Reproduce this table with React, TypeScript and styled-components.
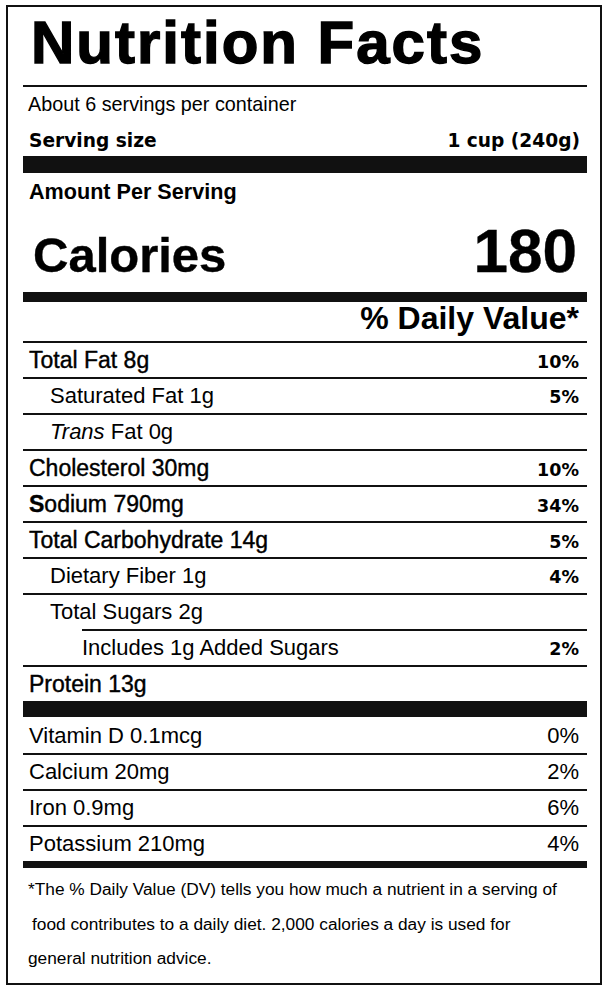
import React from 'react'
import styled, { createGlobalStyle } from 'styled-components'

const GlobalStyle = createGlobalStyle`
  html, body {
    margin: 0;
    padding: 0;
    background: #ffffff;
  }
  body {
    font-family: "Liberation Sans", Arial, sans-serif;
    color: #000;
  }
`

type Nutrient = {
  name: React.ReactNode
  amount: string
  dv?: string
  level: 0 | 1 | 2
  lineInset?: number
}

const nutrients: Nutrient[] = [
  { name: 'Total Fat', amount: '8g', dv: '10%', level: 0 },
  { name: 'Saturated Fat', amount: '1g', dv: '5%', level: 1 },
  { name: <><i>Trans</i> Fat</>, amount: '0g', level: 1 },
  { name: 'Cholesterol', amount: '30mg', dv: '10%', level: 0 },
  { name: <><b>S</b>odium</>, amount: '790mg', dv: '34%', level: 0 },
  { name: 'Total Carbohydrate', amount: '14g', dv: '5%', level: 0 },
  { name: 'Dietary Fiber', amount: '1g', dv: '4%', level: 1 },
  { name: 'Total Sugars', amount: '2g', level: 1, lineInset: 59 },
  { name: 'Includes 1g Added Sugars', amount: '', dv: '2%', level: 2 },
]

const vitamins = [
  { name: 'Vitamin D 0.1mcg', dv: '0%' },
  { name: 'Calcium 20mg', dv: '2%' },
  { name: 'Iron 0.9mg', dv: '6%' },
  { name: 'Potassium 210mg', dv: '4%' },
]

function App() {
  return (
    <>
      <GlobalStyle />
      <Label>
        <Title>Nutrition Facts</Title>
        <Rule $size={2} $gap={8} />
        <Servings>About 6 servings per container</Servings>
        <ServingSize>
          <span>Serving size</span>
          <span>1 cup (240g)</span>
        </ServingSize>
        <Rule $size={17} $gap={3} />
        <AmountPer>Amount Per Serving</AmountPer>
        <CaloriesRow>
          <CaloriesLabel>Calories</CaloriesLabel>
          <CaloriesValue>180</CaloriesValue>
        </CaloriesRow>
        <Rule $size={10} $gap={11} />
        <DailyHead>% Daily Value*</DailyHead>
        <Rule $size={2} $gap={7} />
        {nutrients.map((n, i) => (
          <React.Fragment key={i}>
            <Row $level={n.level}>
              <RowName $main={n.level === 0}>
                {n.name}
                {n.amount ? ' ' + n.amount : ''}
              </RowName>
              {n.dv && <BoldPercent>{n.dv}</BoldPercent>}
            </Row>
            <Rule $size={2} $inset={n.lineInset} />
          </React.Fragment>
        ))}
        <Row $level={0}>
          <RowName $main>Protein 13g</RowName>
        </Row>
        <Rule $size={16} />
        <Vitamins>
          {vitamins.map((v, i) => (
            <React.Fragment key={v.name}>
              <Row $level={0}>
                <RowName>{v.name}</RowName>
                <PlainPercent>{v.dv}</PlainPercent>
              </Row>
              {i < vitamins.length - 1 && <Rule $size={2} />}
            </React.Fragment>
          ))}
        </Vitamins>
        <Rule $size={7} />
        <Footnote>
          <FootLine>*The % Daily Value (DV) tells you how much a nutrient in a serving of</FootLine>
          <FootLine $indent={4}>food contributes to a daily diet. 2,000 calories a day is used for</FootLine>
          <FootLine>general nutrition advice.</FootLine>
        </Footnote>
      </Label>
    </>
  )
}

export default App

const Label = styled.div`
  margin: 5px 0 0 6px;
  width: 596px;
  height: 980px;
  box-sizing: border-box;
  border: 2px solid #111;
  padding: 0 13px 0 15px;
  display: flex;
  flex-direction: column;
  font-family: "Liberation Sans", Arial, sans-serif;
  color: #000;
`

const Title = styled.h1`
  margin: 0;
  height: 70px;
  padding-left: 8px;
  font-size: 60px;
  line-height: 72px;
  font-weight: 700;
  letter-spacing: 2px;
  -webkit-text-stroke: 1.4px #000;
  white-space: nowrap;
`

const Rule = styled.div<{ $size: number; $gap?: number; $inset?: number }>`
  flex: none;
  height: ${p => p.$size}px;
  margin-top: ${p => p.$gap ?? 0}px;
  margin-left: ${p => p.$inset ?? 0}px;
  background: #111;
`

const Servings = styled.div`
  padding: 5px 0 0 5px;
  font-size: 19.8px;
  line-height: 24px;
`

const ServingSize = styled.div`
  margin-top: 13px;
  padding: 0 7px 0 6px;
  display: flex;
  justify-content: space-between;
  font-family: "DejaVu Sans", Verdana, sans-serif;
  font-weight: 700;
  font-size: 18.6px;
  line-height: 24px;
`

const AmountPer = styled.div`
  padding: 7px 0 0 6px;
  font-size: 21.6px;
  line-height: 24px;
  font-weight: 700;
`

const CaloriesRow = styled.div`
  margin-top: 17px;
  padding: 0 10px 0 10px;
  display: flex;
  justify-content: space-between;
  align-items: baseline;
  font-weight: 700;
`

const CaloriesLabel = styled.span`
  font-size: 49px;
  line-height: 48px;
  -webkit-text-stroke: 0.4px #000;
`

const CaloriesValue = styled.span`
  font-size: 62px;
  line-height: 60px;
  -webkit-text-stroke: 0.4px #000;
`

const DailyHead = styled.div`
  padding-right: 8px;
  text-align: right;
  font-size: 32px;
  line-height: 32px;
  font-weight: 700;
`

const Row = styled.div<{ $level: number }>`
  flex: none;
  height: 34px;
  display: flex;
  align-items: baseline;
  justify-content: space-between;
  padding: 0 8px 0 ${p => (p.$level === 2 ? 59 : p.$level === 1 ? 27 : 6)}px;
`

const RowName = styled.span<{ $main?: boolean }>`
  font-size: ${p => (p.$main ? 23 : 22)}px;
  line-height: 34px;
  -webkit-text-stroke: ${p => (p.$main ? '0.4px #000' : '0')};
  white-space: nowrap;

  b {
    font-weight: 700;
  }
`

const BoldPercent = styled.span`
  font-family: "DejaVu Sans", Verdana, sans-serif;
  font-weight: 700;
  font-size: 17.5px;
  line-height: 34px;
`

const PlainPercent = styled.span`
  font-size: 22px;
  line-height: 34px;
`

const Vitamins = styled.div`
  margin-top: 2px;
  display: flex;
  flex-direction: column;
`

const Footnote = styled.div`
  padding: 4px 0 0 5px;
  font-size: 17.3px;
  line-height: 34.5px;
`

const FootLine = styled.div<{ $indent?: number }>`
  padding-left: ${p => p.$indent ?? 0}px;
  white-space: nowrap;
`
